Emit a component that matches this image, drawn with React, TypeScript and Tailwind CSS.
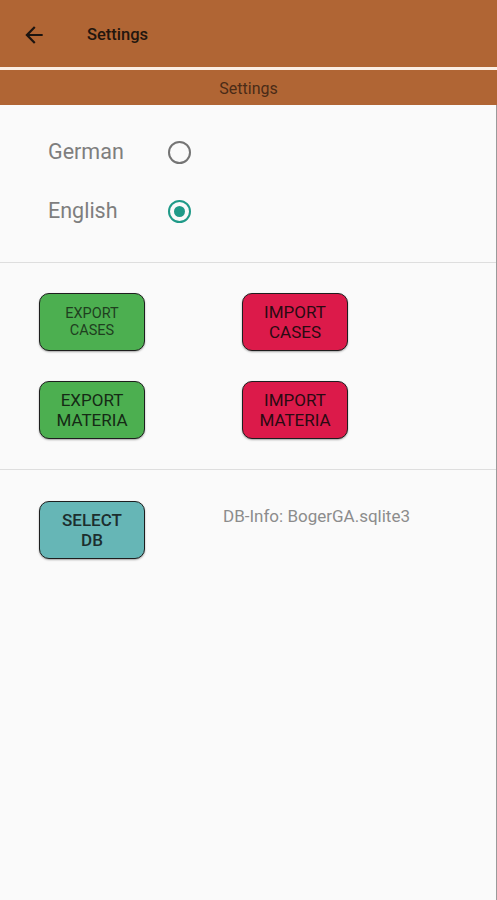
import React from "react";

function BackArrow() {
  return (
    <svg width="26" height="26" viewBox="0 0 24 24" fill="#1c1410">
      <path d="M20 11H7.83l5.59-5.59L12 4l-8 8 8 8 1.41-1.41L7.83 13H20v-2z" />
    </svg>
  );
}

function Radio({ checked }: { checked?: boolean }) {
  if (checked) {
    return (
      <div className="w-[23px] h-[23px] rounded-full border-2 border-[#1f9a88] flex items-center justify-center">
        <div className="w-[11px] h-[11px] rounded-full bg-[#1f9a88]" />
      </div>
    );
  }
  return <div className="w-[23px] h-[23px] rounded-full border-2 border-[#747474]" />;
}

function Btn({
  label1,
  label2,
  bg,
  small,
  color,
}: {
  label1: string;
  label2: string;
  bg: string;
  small?: boolean;
  color: string;
}) {
  return (
    <div
      className={`w-[106px] h-[58px] rounded-[10px] border-[1.5px] border-[#1e1e1e] shadow-[0_1px_2px_rgba(0,0,0,0.35)] flex flex-col items-center justify-center ${bg} ${color} ${
        small ? "text-[14.5px] leading-[17px]" : "text-[17px] leading-[20px]"
      }`}
    >
      <span>{label1}</span>
      <span>{label2}</span>
    </div>
  );
}

export default function App() {
  return (
    <div
      className="w-[497px] h-[900px] bg-[#fafafa] flex flex-col"
      style={{ fontFamily: "Roboto, 'Noto Sans', sans-serif" }}
    >
      <div className="h-[67px] bg-[#b06534] flex items-center shrink-0">
        <div className="ml-[21px] mt-[2px]">
          <BackArrow />
        </div>
        <span className="ml-[40px] text-[16.5px] font-medium text-[#22160e] mt-[4px]">Settings</span>
      </div>
      <div className="h-[3px] bg-[#fbeee4] shrink-0" />
      <div className="h-[35px] bg-[#b06534] flex items-center justify-center shrink-0">
        <span className="text-[16px] text-[#4a2b17] mt-[3px]">Settings</span>
      </div>
      <div className="flex-1 flex flex-col border-r border-[#9a9a9a]">
        <div className="pt-[27px] pb-[31px] flex flex-col gap-[19px] border-b border-[#dedede]">
          <div className="h-[40px] flex items-center">
            <span className="ml-[48px] w-[120px] text-[21.5px] text-[#7e7e7e]">German</span>
            <Radio />
          </div>
          <div className="h-[40px] flex items-center">
            <span className="ml-[48px] w-[120px] text-[21.5px] text-[#7e7e7e]">English</span>
            <Radio checked />
          </div>
        </div>
        <div className="pt-[30px] pb-[30px] flex flex-col gap-[30px] border-b border-[#dedede]">
          <div className="flex pl-[39px] gap-[97px]">
            <Btn label1="EXPORT" label2="CASES" bg="bg-[#4caf50]" color="text-[#1f3f1f]" small />
            <Btn label1="IMPORT" label2="CASES" bg="bg-[#dc1a4a]" color="text-[#2a0a12]" />
          </div>
          <div className="flex pl-[39px] gap-[97px]">
            <Btn label1="EXPORT" label2="MATERIA" bg="bg-[#4caf50]" color="text-[#152a15]" />
            <Btn label1="IMPORT" label2="MATERIA" bg="bg-[#dc1a4a]" color="text-[#2a0a12]" />
          </div>
        </div>
        <div className="pt-[31px] flex pl-[39px]">
          <Btn label1="SELECT" label2="DB" bg="bg-[#66b6b6]" color="text-[#1c2e2e] font-medium" />
          <span className="ml-[78px] mt-[3px] text-[17px] text-[#8c8c8c]">DB-Info: BogerGA.sqlite3</span>
        </div>
      </div>
    </div>
  );
}
